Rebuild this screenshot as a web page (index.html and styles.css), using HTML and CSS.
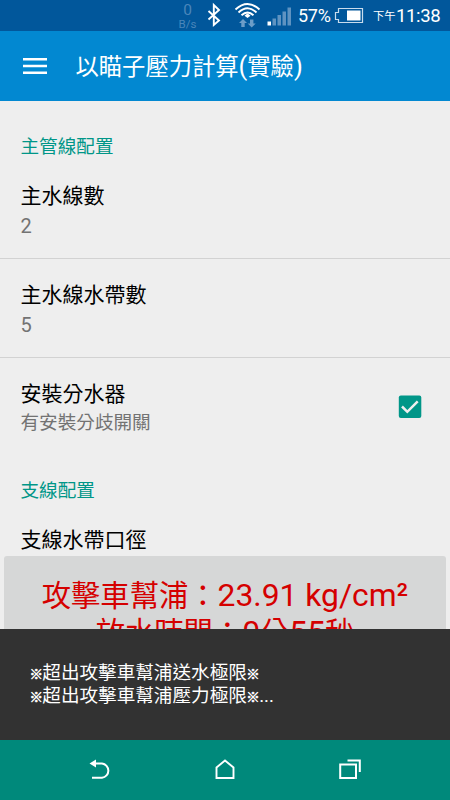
FILE: index.html
```html
<!DOCTYPE html>
<html lang="zh-Hant">
<head>
<meta charset="utf-8">
<title>以瞄子壓力計算(實驗)</title>
<link rel="stylesheet" href="styles.css">
</head>
<body>
<div class="screen">
  <div class="status">
    <div class="speed"><span class="speed-num">0</span><span>B/s</span></div>
    <svg class="status-icons" width="90" height="31" viewBox="205 0 90 31" fill="none">
      <path d="M208.500 11L219 20.500L213.800 25V5L219 10L208.500 19.500" stroke="#fff" stroke-width="1.900"/>
      <g stroke="#fff" stroke-width="1.900">
        <path d="M235.500 9.500Q247.500 -1.500 259.500 9.500"/>
        <path d="M238.500 12.500Q247.500 4 256.500 12.500"/>
        <path d="M241.500 15.300Q247.500 9.500 253.500 15.300"/>
      </g>
      <path d="M244.500 15.700L247.500 13.300L250.500 15.700L247.500 18z" fill="#fff"/>
      <path d="M243 19l4 4h-2.300v4h-3.400v-4H239zM251.700 27.500l-4-4h2.300v-4h3.400v4h2.300z" fill="#6d9dc8"/>
      <path d="M267.500 21.500h3.500v4h-3.500z" fill="#fff"/>
      <path d="M272.500 18.500h3.500v7h-3.500zM277.500 15h3.500v10.500h-3.500zM282.500 11.500h3.500v14h-3.500zM287.500 7.500h3.500v18h-3.500z" fill="#5f93c1"/>
    </svg>
    <span class="percent">57%</span>
    <svg class="battery" width="30" height="31" viewBox="334 0 30 31" fill="none">
      <path d="M338.500 8.500H362.500V22.500H338.500V19.500H335.500V12.500H338.500z" stroke="#c9dced" stroke-width="1.200"/>
      <path d="M347 10.500h13.500v10H347z" fill="#fff"/>
    </svg>
    <span class="ampm">下午</span><span class="clock">11:38</span>
  </div>
  <header class="toolbar">
    <svg width="24" height="16" viewBox="0 0 24 16"><path d="M0 0h24v2.600H0zM0 6.700h24v2.600H0zM0 13.400h24V16H0z" fill="#fff"/></svg>
    <h1>以瞄子壓力計算<span class="paren">(</span>實驗<span class="paren">)</span></h1>
  </header>
  <main class="list">
    <h2 class="category">主管線配置</h2>
    <section class="pref first">
      <div><div class="title">主水線數</div><div class="summary number">2</div></div>
    </section>
    <section class="pref">
      <div><div class="title">主水線水帶數</div><div class="summary number">5</div></div>
    </section>
    <section class="pref">
      <div><div class="title">安裝分水器</div><div class="summary">有安裝分歧開關</div></div>
      <svg class="check" width="24" height="24" viewBox="0 0 24 24"><rect x=".8" y=".5" width="22.500" height="22.500" rx="2" fill="#009688"/><path d="M4 11.500L9.300 16.800L19.700 6.300" fill="none" stroke="#eee" stroke-width="2.500"/></svg>
    </section>
    <h2 class="category second">支線配置</h2>
    <section class="pref first"><div class="title">支線水帶口徑</div></section>
  </main>
  <div class="result">
    <div class="card">
      <div>攻擊車幫浦：<span class="latin">23.91 kg/cm²</span></div>
      <div>放水時間：<span class="latin">0</span>分<span class="latin">55</span>秒</div>
    </div>
  </div>
  <div class="snackbar">
    <div><span class="mark">※</span>超出攻擊車幫浦送水極限<span class="mark">※</span></div>
    <div><span class="mark">※</span>超出攻擊車幫浦壓力極限<span class="mark">※</span>...</div>
  </div>
  <nav class="navbar">
    <svg width="22" height="22" viewBox="0 0 22 22" fill="none"><path d="M5 4.500H13A7.200 7.200 0 0 1 13 18.800H3" stroke="#fff" stroke-width="2"/><path d="M.5 4.500L7 .5V8.500z" fill="#fff"/></svg>
    <svg width="22" height="22" viewBox="0 0 22 22" fill="none"><path d="M2.500 8.500L11 1.500L19.500 8.500V19H2.500z" stroke="#fff" stroke-width="1.900"/></svg>
    <svg width="24" height="22" viewBox="0 0 24 22" fill="none" stroke="#fff"><path d="M2.200 5.500H18V19H2.200z" stroke-width="2"/><path d="M9.500 1.500H21.800V13" stroke-width="2"/></svg>
  </nav>
</div>
</body>
</html>
```
FILE: styles.css
```css
* { box-sizing: border-box; }
body {
  margin: 0;
  font-family: Roboto, "Noto Sans CJK TC", sans-serif;
}
h1, h2 { margin: 0; font-weight: 400; }
.screen {
  width: 450px;
  height: 800px;
  display: flex;
  flex-direction: column;
  overflow: hidden;
  background: #eee;
}
.status {
  height: 31px;
  flex: none;
  display: flex;
  align-items: center;
  padding-left: 176px;
  background: #01579b;
  color: #fff;
  white-space: nowrap;
}
.speed {
  width: 23px;
  margin-right: 6px;
  padding-top: 1px;
  display: flex;
  flex-direction: column;
  align-items: center;
  font-size: 11.500px;
  line-height: 12px;
  color: #4a86ba;
}
.speed-num { font-size: 15.500px; line-height: 16px; }
.status-icons { margin-right: 3px; }
.percent { width: 36px; font-size: 18px; letter-spacing: -0.3px; }
.battery { flex: none; }
.ampm {
  width: 23px;
  margin-left: 9px;
  font-size: 11.300px;
  line-height: 16px;
  padding-top: 2px;
}
.clock { font-size: 18.600px; letter-spacing: -0.4px; }
.toolbar {
  height: 70px;
  flex: none;
  display: flex;
  align-items: center;
  padding-left: 23px;
  background: #0288d1;
  color: #fff;
}
.toolbar h1 {
  margin-left: 28.500px;
  font-size: 23.300px;
  line-height: 32px;
  padding-top: 1px;
}
.paren { font-size: 25.500px; line-height: 1; }
.list {
  height: 455px;
  flex: none;
  overflow: hidden;
  padding-top: 33px;
}
.category {
  padding-left: 20.500px;
  font-size: 18.600px;
  line-height: 27px;
  color: #009688;
}
.category.second { margin-top: 22px; }
.pref {
  height: 99px;
  padding: 21px 28px 0 20.500px;
  display: flex;
  justify-content: space-between;
  border-top: 1px solid #d2d2d2;
}
.pref.first {
  height: 97px;
  padding-top: 20px;
  border-top: 0;
}
.title {
  font-size: 21px;
  line-height: 30px;
  color: #000;
}
.summary {
  font-size: 18.600px;
  line-height: 28px;
  color: #737373;
}
.summary.number { font-size: 20px; line-height: 30px; }
.check { margin-top: 16px; }
.result {
  height: 73px;
  flex: none;
  padding: 0 4px;
  overflow: hidden;
}
.card {
  height: 110px;
  padding-top: 22px;
  border-radius: 3px;
  background: #d6d7d7;
  color: #d50000;
  font-size: 29.300px;
  line-height: 37px;
  text-align: center;
}
.latin { font-size: 31.800px; line-height: 1; }
.snackbar {
  height: 111px;
  flex: none;
  padding: 33px 30px;
  background: #323232;
  color: #fff;
  font-size: 18.600px;
  line-height: 23px;
}
.mark {
  display: inline-block;
  width: 12.300px;
  font-size: 13.500px;
  line-height: 1;
  text-indent: -0.500px;
  -webkit-text-stroke: 0.5px #fff;
}
.navbar {
  flex: 1;
  display: flex;
  align-items: center;
  justify-content: space-between;
  padding: 0 88px 0 89px;
  background: #00897b;
}
```
